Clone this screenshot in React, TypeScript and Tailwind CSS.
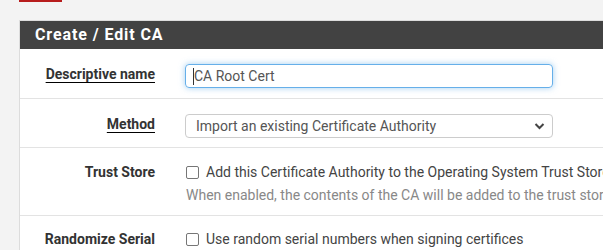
import React from 'react';

const Checkbox: React.FC = () => (
  <span className="inline-block w-[13px] h-[13px] shrink-0 rounded-[2px] border border-[#767676] bg-white" />
);

const Label: React.FC<{ text: string; required?: boolean }> = ({ text, required }) => (
  <div className="w-[150px] shrink-0 pr-[15px] text-right text-[14px] leading-[20px] font-bold text-[#333]">
    <span className={required ? 'underline decoration-black underline-offset-[3px]' : ''}>{text}</span>
  </div>
);

const App: React.FC = () => {
  return (
    <div className="w-[603px] h-[250px] overflow-hidden bg-[#f3f3f3] font-['Roboto',sans-serif]">
      <div className="ml-[19px] w-[43px] h-[2px] bg-[#b71c1c]" />
      <div className="ml-[19px] mt-[18px] w-[760px] border border-[#dcdcdc] bg-white">
        <div className="h-[28px] bg-[#424242] pl-[15px] flex items-center">
          <h2 className="text-[16px] leading-[20px] font-bold tracking-[0.9px] text-white">Create / Edit CA</h2>
        </div>

        {/* Descriptive name */}
        <div className="flex pt-[15px] pb-[10px] border-b border-[#e3e3e3]">
          <Label text="Descriptive name" required />
          <div className="pl-[15px]">
            <div className="w-[368px] h-[24px] rounded-[4px] border border-[#66afe9] shadow-[0_0_6px_rgba(102,175,233,0.6)] pl-[7px] flex items-center text-[14px] leading-[20px] text-[#555]">
              <span className="inline-block w-px h-[17px] bg-[#333]" />
              <span>CA Root Cert</span>
            </div>
          </div>
        </div>

        {/* Method */}
        <div className="flex pt-[15px] pb-[9px] border-b border-[#e3e3e3]">
          <Label text="Method" required />
          <div className="pl-[15px]">
            <div className="w-[368px] h-[24px] rounded-[4px] border border-[#cccccc] pl-[10px] pr-[6px] flex items-center justify-between text-[14px] leading-[20px] text-[#555]">
              <span>Import an existing Certificate Authority</span>
              <svg width="11" height="8" viewBox="0 0 11 8" className="mr-[1px]">
                <path d="M1.5 2 L5.5 6 L9.5 2" fill="none" stroke="#444" strokeWidth="2" />
              </svg>
            </div>
          </div>
        </div>

        {/* Trust Store */}
        <div className="flex pt-[14px] pb-[10px] border-b border-[#e3e3e3]">
          <Label text="Trust Store" />
          <div className="pl-[16px] text-[14px] leading-[20px] whitespace-nowrap">
            <div className="flex items-center gap-[7px] text-[#444]">
              <Checkbox />
              <span>Add this Certificate Authority to the Operating System Trust Store</span>
            </div>
            <div className="mt-[3px] text-[#888]">
              When enabled, the contents of the CA will be added to the trust store so that they will be trusted by the operating system.
            </div>
          </div>
        </div>

        {/* Randomize Serial */}
        <div className="flex pt-[13px] pb-[10px]">
          <Label text="Randomize Serial" />
          <div className="pl-[16px] text-[14px] leading-[20px] whitespace-nowrap">
            <div className="flex items-center gap-[7px] text-[#444]">
              <Checkbox />
              <span>Use random serial numbers when signing certifices</span>
            </div>
          </div>
        </div>
      </div>
    </div>
  );
};

export default App;
